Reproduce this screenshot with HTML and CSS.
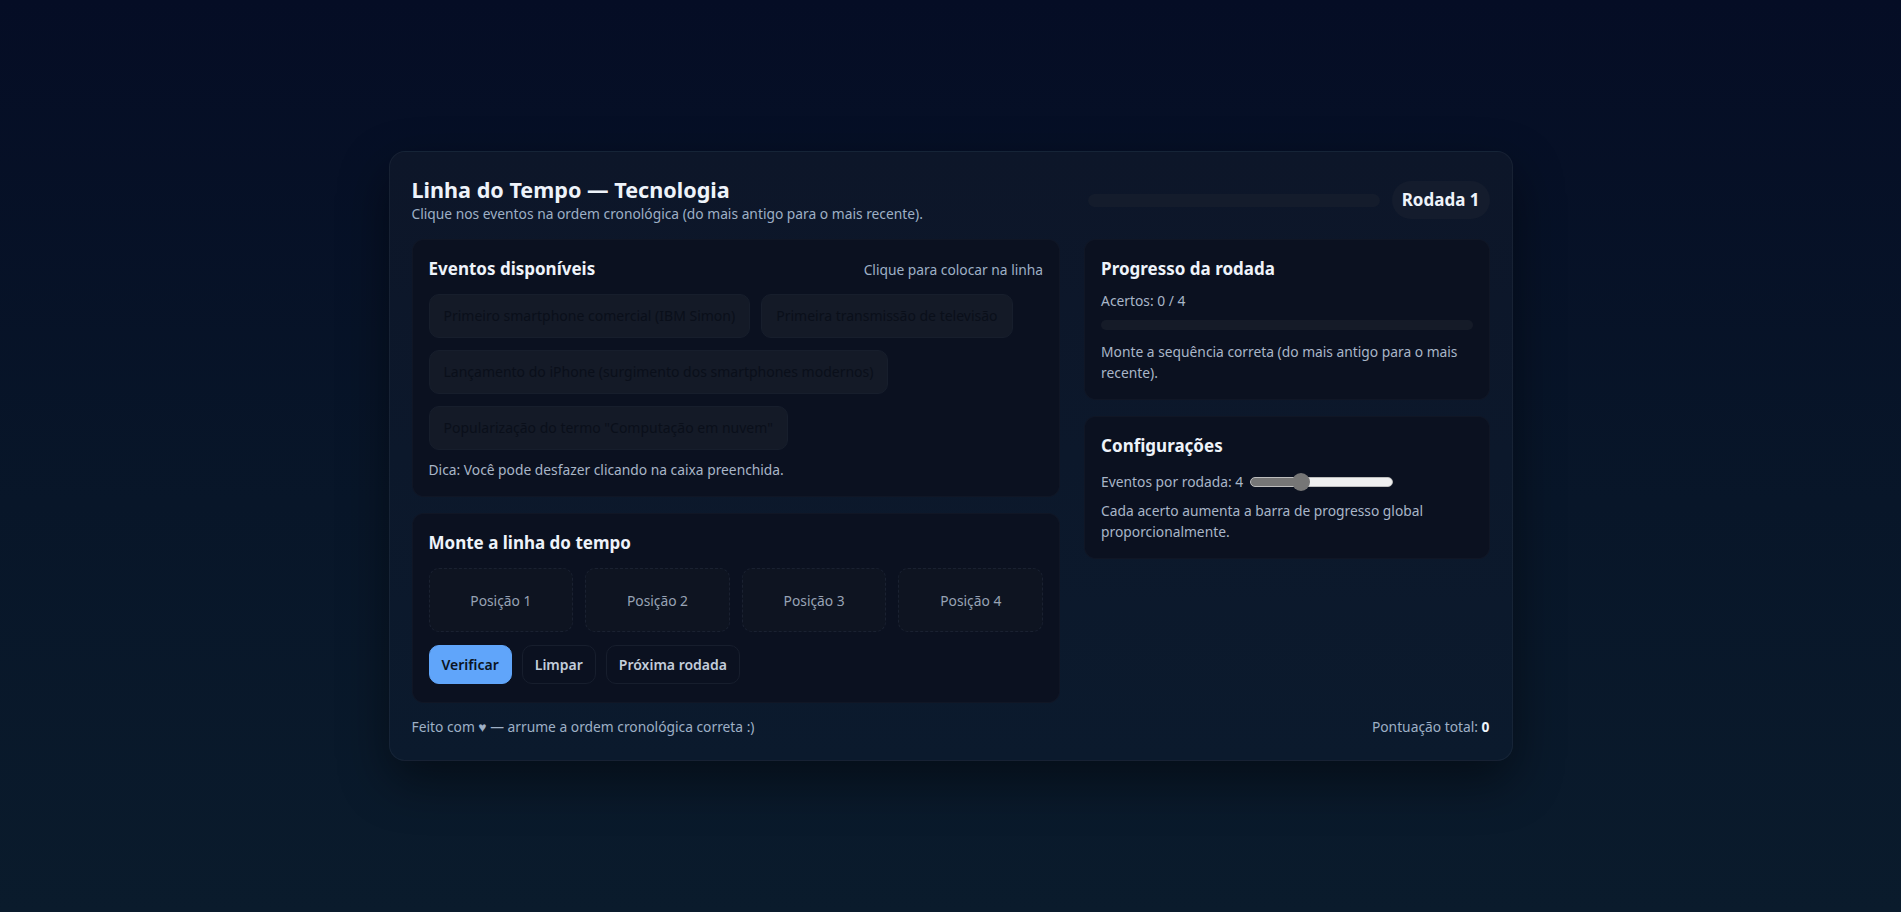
FILE: index.html
```html
<!DOCTYPE html>
<html lang="pt-BR">
<head>
<meta charset="utf-8">
<title>Linha do Tempo — Tecnologia</title>
<link rel="stylesheet" href="styles.css">
</head>
<body>
<main class="app">
  <header class="app-header">
    <div class="titles">
      <h1 class="app-title">Linha do Tempo — Tecnologia</h1>
      <p class="subtitle">Clique nos eventos na ordem cronológica (do mais antigo para o mais recente).</p>
    </div>
    <div class="header-right">
      <div class="global-bar"><div class="global-fill" style="width:0%"></div></div>
      <div class="round-badge">Rodada 1</div>
    </div>
  </header>

  <div class="layout">
    <div class="col">
      <section class="panel">
        <div class="panel-head">
          <h2 class="panel-title">Eventos disponíveis</h2>
          <span class="hint">Clique para colocar na linha</span>
        </div>
        <div class="chips">
          <button class="chip">Primeiro smartphone comercial (IBM Simon)</button>
          <button class="chip">Primeira transmissão de televisão</button>
          <button class="chip">Lançamento do iPhone (surgimento dos smartphones modernos)</button>
          <button class="chip">Popularização do termo "Computação em nuvem"</button>
        </div>
        <p class="tip">Dica: Você pode desfazer clicando na caixa preenchida.</p>
      </section>

      <section class="panel">
        <h2 class="panel-title">Monte a linha do tempo</h2>
        <div class="slots">
          <div class="slot">Posição 1</div>
          <div class="slot">Posição 2</div>
          <div class="slot">Posição 3</div>
          <div class="slot">Posição 4</div>
        </div>
        <div class="actions">
          <button class="btn btn-primary">Verificar</button>
          <button class="btn">Limpar</button>
          <button class="btn">Próxima rodada</button>
        </div>
      </section>
    </div>

    <aside class="col">
      <section class="panel">
        <h2 class="panel-title">Progresso da rodada</h2>
        <p class="muted score-line">Acertos: 0 / 4</p>
        <div class="round-bar"><div class="round-fill" style="width:0%"></div></div>
        <p class="muted">Monte a sequência correta (do mais antigo para o mais recente).</p>
      </section>

      <section class="panel">
        <h2 class="panel-title">Configurações</h2>
        <label class="setting">
          <span>Eventos por rodada: 4</span>
          <input class="range" type="range" min="3" max="6" value="4">
        </label>
        <p class="muted">Cada acerto aumenta a barra de progresso global proporcionalmente.</p>
      </section>
    </aside>
  </div>

  <footer class="app-footer">
    <span>Feito com ♥ — arrume a ordem cronológica correta :)</span>
    <span>Pontuação total: <strong class="score">0</strong></span>
  </footer>
</main>
</body>
</html>
```

FILE: styles.css
```css
* { box-sizing: border-box; }

html, body { height: 100%; }

body {
  margin: 0;
  min-height: 100vh;
  display: flex;
  align-items: center;
  justify-content: center;
  background: linear-gradient(180deg, #050d25 0%, #081629 55%, #0a1b2c 100%);
  font-family: "Noto Sans", "Open Sans", sans-serif;
  color: #e6edf7;
}

.app {
  width: 1124px;
  padding: 24px 22px 23px;
  border-radius: 16px;
  border: 1px solid rgba(148, 163, 184, 0.08);
  background: linear-gradient(180deg, #0d1629 0%, #0b1a2d 100%);
  box-shadow: 0 20px 50px rgba(0, 0, 0, 0.45);
}

.app-header {
  display: flex;
  align-items: center;
  justify-content: space-between;
  margin-bottom: 15px;
}

.app-title {
  margin: 0;
  font-size: 21.6px;
  line-height: 28px;
  font-weight: 700;
  color: #eef3fa;
}

.subtitle {
  margin: 0;
  font-size: 13.8px;
  line-height: 20px;
  color: #9eb0c6;
}

.header-right {
  display: flex;
  align-items: center;
  gap: 12px;
}

.global-bar {
  width: 292px;
  height: 13px;
  border-radius: 999px;
  background: #141c2c;
  overflow: hidden;
}

.global-fill { height: 100%; background: #60a5fa; }

.round-badge {
  padding: 8px 10px;
  border-radius: 999px;
  background: #141c2d;
  font-size: 17px;
  line-height: 22px;
  font-weight: 700;
  color: #eef3fa;
}

.layout {
  display: grid;
  grid-template-columns: 1.6fr 1fr;
  gap: 24px;
  align-items: start;
}

.col {
  display: flex;
  flex-direction: column;
  gap: 16px;
}

.panel {
  padding: 16px;
  border-radius: 12px;
  background: #0b1120;
  border: 1px solid rgba(148, 163, 184, 0.04);
}

.panel-head {
  display: flex;
  align-items: center;
  justify-content: space-between;
}

.panel-title {
  margin: 0;
  font-size: 17px;
  line-height: 26px;
  font-weight: 700;
  color: #eef3fa;
}

.hint {
  font-size: 13.8px;
  color: #9eb0c6;
}

.chips {
  display: flex;
  flex-wrap: wrap;
  gap: 12px 11px;
  margin-top: 12px;
}

.chip {
  padding: 11px 14px;
  border-radius: 10px;
  border: 1px solid #171e2c;
  background: #141a27;
  font-family: inherit;
  font-size: 14px;
  line-height: 20px;
  color: #0a0f1a;
  text-align: left;
}

.tip {
  margin: 9px 0 0;
  font-size: 13.8px;
  line-height: 21px;
  color: #a9b6c8;
}

.slots {
  display: grid;
  grid-template-columns: repeat(4, 1fr);
  gap: 12px;
  margin-top: 12px;
}

.slot {
  height: 64px;
  display: flex;
  align-items: center;
  justify-content: center;
  border-radius: 10px;
  border: 1px dashed #1a2131;
  background: #0e1421;
  font-size: 13.8px;
  color: #98a3b5;
}

.actions {
  display: flex;
  gap: 10px;
  margin: 13px 0 2px;
}

.btn {
  height: 39px;
  padding: 0 12px;
  border-radius: 10px;
  border: 1px solid #171e2d;
  background: #0b1120;
  font-family: inherit;
  font-size: 14px;
  font-weight: 600;
  color: #c3cddb;
}

.btn-primary {
  background: #60a5fa;
  border-color: #60a5fa;
  color: #0b1422;
}

.muted {
  margin: 0;
  font-size: 13.8px;
  line-height: 21px;
  color: #a9b6c8;
}

.score-line { margin-top: 8px; }

.round-bar {
  height: 10px;
  margin: 9px 0 11px;
  border-radius: 999px;
  background: #151b28;
  overflow: hidden;
}

.round-fill { height: 100%; background: #60a5fa; }

.setting {
  display: flex;
  align-items: center;
  gap: 7px;
  margin: 12px 0 8px;
  font-size: 13.8px;
  line-height: 21px;
  color: #a9b6c8;
}

.range {
  -webkit-appearance: none;
  appearance: none;
  width: 143px;
  height: 10px;
  margin: 0;
  border-radius: 999px;
  border: 1px solid #bdbdbd;
  background: linear-gradient(90deg, #767676 0%, #767676 38%, #efefef 38%, #efefef 100%);
}

.range::-webkit-slider-thumb {
  -webkit-appearance: none;
  appearance: none;
  width: 18px;
  height: 18px;
  border-radius: 50%;
  background: #767676;
  border: none;
}

.app-footer {
  display: flex;
  justify-content: space-between;
  align-items: center;
  margin-top: 14px;
  font-size: 13.8px;
  line-height: 20px;
  color: #9eb0c6;
}

.score { color: #eef3fa; font-weight: 700; }
```
